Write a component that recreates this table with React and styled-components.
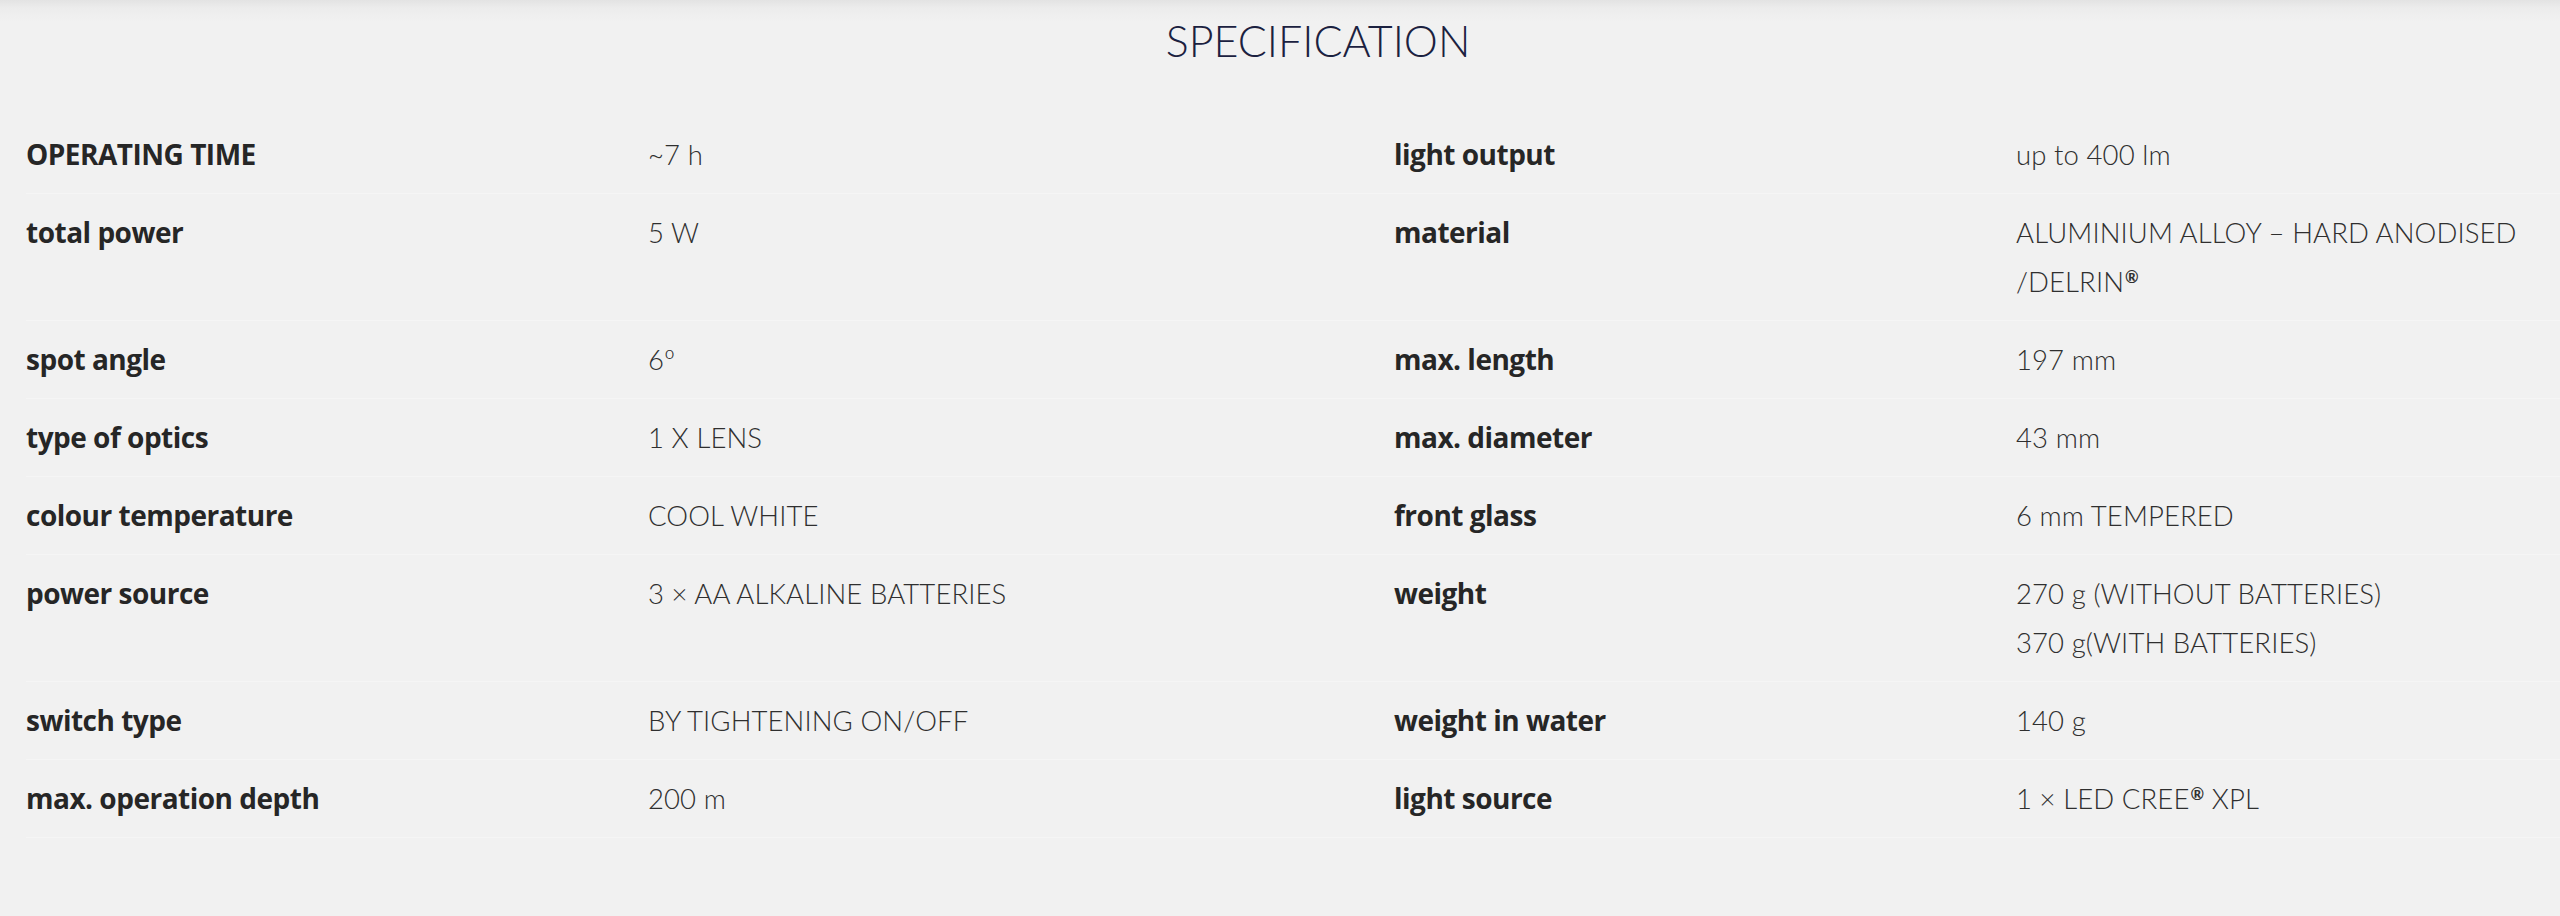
import styled, { createGlobalStyle } from "styled-components";

const GlobalStyle = createGlobalStyle`
  html, body {
    margin: 0;
    padding: 0;
    background: #f1f1f1;
  }
`;

const Section = styled.section`
  width: 100%;
  min-height: 916px;
  background: linear-gradient(#e3e3e3 0px, #ececec 8px, #f1f1f1 22px, #f1f1f1);
  font-family: Lato, "Open Sans", sans-serif;
  box-sizing: border-box;
`;

const Title = styled.h2`
  margin: 0;
  padding-top: 14px;
  height: 116px;
  box-sizing: border-box;
  text-align: center;
  font-family: Lato, sans-serif;
  font-weight: 300;
  font-size: 43px;
  line-height: 54px;
  color: #1b2140;
  padding-left: 76px;
`;

const Table = styled.div`
  display: grid;
  grid-template-columns: 622px 746px 622px 1fr;
  padding-left: 26px;
`;

const Row = styled.div`
  display: contents;

  & > * {
    padding: 14px 0 14px;
    border-bottom: 1px solid #f5f5f5;
  }
`;

const Label = styled.div`
  font-family: "Open Sans", Lato, sans-serif;
  font-weight: 700;
  font-size: 28px;
  line-height: 49px;
  color: #262626;
  letter-spacing: -0.5px;
`;

const Value = styled.div`
  font-weight: 300;
  font-size: 27.5px;
  line-height: 49px;
  color: #2f2f2f;
  letter-spacing: 0.1px;
`;

const Reg = styled.sup`
  font-size: 0.6em;
  font-weight: 700;
  line-height: 0;
  vertical-align: 0.55em;
  margin-left: 1px;
`;

const rows = [
  ["OPERATING TIME", "~7 h", "light output", "up to 400 lm"],
  ["total power", "5 W", "material", ["ALUMINIUM ALLOY – HARD ANODISED", "/DELRIN®"]],
  ["spot angle", "6º", "max. length", "197 mm"],
  ["type of optics", "1 X LENS", "max. diameter", "43 mm"],
  ["colour temperature", "COOL WHITE", "front glass", "6 mm TEMPERED"],
  ["power source", "3 × AA ALKALINE BATTERIES", "weight", ["270 g (WITHOUT BATTERIES)", "370 g(WITH BATTERIES)"]],
  ["switch type", "BY TIGHTENING ON/OFF", "weight in water", "140 g"],
  ["max. operation depth", "200 m", "light source", "1 × LED CREE® XPL"],
];

// put the ® marks up as small superscripts, like the original
const withReg = (text) =>
  text.split("®").map((part, i, arr) => (
    <span key={i}>
      {part}
      {i < arr.length - 1 && <Reg>®</Reg>}
    </span>
  ));

const renderValue = (v) =>
  Array.isArray(v)
    ? v.map((line, i) => (
        <span key={i}>
          {withReg(line)}
          {i < v.length - 1 && <br />}
        </span>
      ))
    : withReg(v);

export default function App() {
  return (
    <>
      <GlobalStyle />
      <Section>
        <Title>SPECIFICATION</Title>
        <Table>
          {rows.map(([l1, v1, l2, v2]) => (
            <Row key={l1}>
              <Label>{l1}</Label>
              <Value>{renderValue(v1)}</Value>
              <Label>{l2}</Label>
              <Value>{renderValue(v2)}</Value>
            </Row>
          ))}
        </Table>
      </Section>
    </>
  );
}
